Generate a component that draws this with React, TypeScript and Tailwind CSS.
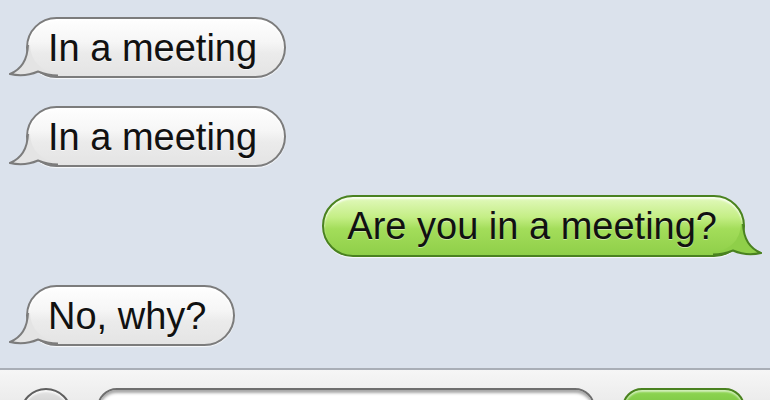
import React from 'react';

interface Message {
  id: number;
  text: string;
  mine: boolean;
}

const messages: Message[] = [
  { id: 1, text: 'In a meeting', mine: false },
  { id: 2, text: 'In a meeting', mine: false },
  { id: 3, text: 'Are you in a meeting?', mine: true },
  { id: 4, text: 'No, why?', mine: false },
];

// tail of the bubble, drawn over the bottom corner of the body
function Tail({ mine }: { mine: boolean }) {
  const fill = mine ? '#8fcf49' : '#e4e4e4';
  const stroke = mine ? '#4a8220' : '#7c7c7c';
  return (
    <svg
      width="50"
      height="32"
      viewBox="0 0 50 32"
      className={
        mine
          ? 'absolute right-[-19px] bottom-[-1px] -scale-x-100'
          : 'absolute left-[-19px] bottom-[-1px]'
      }
    >
      <path
        d="M19 -2 C19 13 13 24 1 29 C10 31 21 30 29 26.5 C35 29 41 30.5 49 30.5 L49 28 A28 28 0 0 1 21 0 Z"
        fill={fill}
      />
      <path
        d="M19 -2 C19 13 13 24 1 29 C10 31 21 30 29 26.5 C35 29 41 30.5 49 30.5"
        fill="none"
        stroke={stroke}
        strokeWidth="2"
      />
    </svg>
  );
}

function Bubble({ message }: { message: Message }) {
  if (message.mine) {
    return (
      <div className="relative self-end mr-[25px] h-[62px] flex items-center pl-[23px] pr-[26px] rounded-full border-2 border-[#4a8220] bg-[linear-gradient(to_bottom,#e2f9bd_0%,#c4ee85_35%,#a3dd5a_55%,#8fcf49_100%)] shadow-[inset_0_2px_2px_rgba(255,255,255,0.8),0_1px_1px_rgba(255,255,255,0.8)]">
        <span className="text-[38px] leading-none text-[#111] [text-shadow:0_1px_0_rgba(255,255,255,0.45)]">
          {message.text}
        </span>
        <Tail mine />
      </div>
    );
  }
  return (
    <div className="relative self-start ml-[26px] h-[61px] flex items-center pl-[20px] pr-[27px] rounded-full border-2 border-[#7c7c7c] bg-[linear-gradient(to_bottom,#fefefe_0%,#f6f6f6_40%,#ebebeb_60%,#e4e4e4_100%)] shadow-[inset_0_2px_2px_rgba(255,255,255,0.9),0_1px_1px_rgba(255,255,255,0.8)]">
      <span className="text-[38px] leading-none text-[#111] [text-shadow:0_1px_0_rgba(255,255,255,0.7)]">
        {message.text}
      </span>
      <Tail mine={false} />
    </div>
  );
}

export default function App() {
  return (
    <div className="w-[770px] h-[400px] overflow-hidden flex flex-col bg-[#dbe2ec] font-['Liberation_Sans',Arial,sans-serif]">
      {/* Сообщения */}
      <div className="h-[368px] shrink-0 flex flex-col gap-[28px] pt-[17px]">
        {messages.map((m) => (
          <Bubble key={m.id} message={m} />
        ))}
      </div>

      {/* Панель ввода */}
      <div className="flex-1 min-h-0 overflow-hidden flex items-start pt-[18px] border-t-2 border-[#a9aeb6] bg-[linear-gradient(to_bottom,#f6f6f6,#ececec)]">
        <div className="ml-[20px] w-[52px] h-[52px] shrink-0 rounded-full border-2 border-[#5f5f5f] bg-[linear-gradient(to_bottom,#e4e4e4,#a9a9a9)] shadow-[inset_0_2px_2px_rgba(255,255,255,0.8)]" />
        <div className="ml-[25px] w-[498px] h-[44px] shrink-0 rounded-[20px] border-2 border-[#6e6e6e] bg-white shadow-[inset_0_3px_3px_rgba(0,0,0,0.35)]" />
        <div className="ml-[27px] w-[123px] h-[44px] shrink-0 rounded-[20px] border-2 border-[#4a8220] bg-[linear-gradient(to_bottom,#8fd653,#5fb02a)] shadow-[inset_0_2px_2px_rgba(255,255,255,0.6)]" />
      </div>
    </div>
  );
}
